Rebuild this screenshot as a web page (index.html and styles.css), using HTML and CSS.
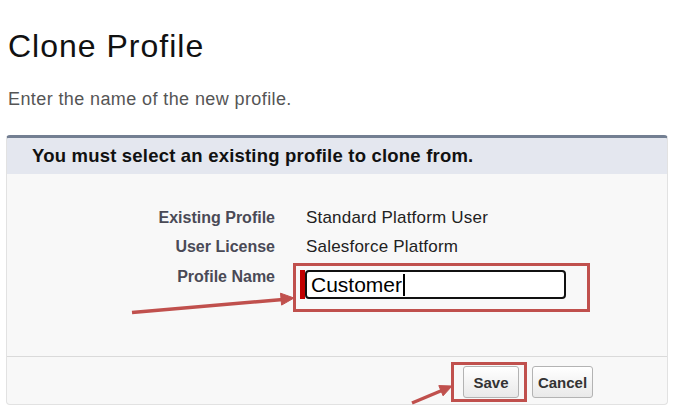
FILE: index.html
```html
<!DOCTYPE html>
<html lang="en">
<head>
<meta charset="utf-8">
<title>Clone Profile</title>
<link rel="stylesheet" href="styles.css">
</head>
<body>
<h1 class="page-title">Clone Profile</h1>
<p class="subtitle">Enter the name of the new profile.</p>

<div class="panel">
  <div class="panel-head">You must select an existing profile to clone from.</div>
  <div class="panel-body">
    <div class="row">
      <div class="label">Existing Profile</div>
      <div class="value">Standard Platform User</div>
    </div>
    <div class="row">
      <div class="label">User License</div>
      <div class="value">Salesforce Platform</div>
    </div>
    <div class="row row-input">
      <div class="label label-input">Profile Name</div>
      <div class="highlight highlight-input">
        <span class="req"></span>
        <div class="input">Customer<span class="caret"></span></div>
      </div>
    </div>
  </div>
  <div class="panel-foot">
    <div class="highlight highlight-btn">
      <button class="btn btn-save" type="button">Save</button>
    </div>
    <button class="btn btn-cancel" type="button">Cancel</button>
  </div>
</div>

<svg class="annotations" width="673" height="409" viewBox="0 0 673 409" aria-hidden="true">
  <g fill="#c0504d" stroke="#c0504d">
    <line x1="132" y1="312.5" x2="283" y2="299.4" stroke-width="3.5"/>
    <polygon points="294,298 281.6,305.1 280.5,293.2" stroke-width="1"/>
    <line x1="412" y1="403" x2="443" y2="390" stroke-width="3.5"/>
    <polygon points="452,386 443.1,395.8 438.8,385.6" stroke-width="1"/>
  </g>
</svg>
</body>
</html>
```
FILE: styles.css
```css
html, body {
  margin: 0;
  padding: 0;
  background: #ffffff;
}

body {
  position: relative;
  width: 673px;
  height: 409px;
  overflow: hidden;
  font-family: "Liberation Sans", Arial, sans-serif;
  color: #222;
}

.page-title {
  margin: 31px 0 0 8px;
  font-size: 32px;
  line-height: 30px;
  font-weight: normal;
  letter-spacing: 1px;
  color: #111;
}

.subtitle {
  margin: 30px 0 0 8px;
  font-size: 18px;
  line-height: 17px;
  letter-spacing: 0.4px;
  color: #555;
}

.panel {
  margin: 27px 5px 0 6px;
  border: 1px solid #e2e2e2;
  border-top: 3px solid #737f92;
  border-radius: 4px;
  background: #f8f8f8;
  overflow: hidden;
}

.panel-head {
  height: 36px;
  line-height: 36px;
  padding-left: 25px;
  background: #e4e7ef;
  font-size: 18.5px;
  font-weight: bold;
  letter-spacing: 0.2px;
  color: #111;
}

.panel-body {
  padding: 34px 0 44px;
}

.row {
  display: flex;
  align-items: flex-start;
}

.row + .row {
  margin-top: 9px;
}

.row.row-input {
  margin-top: 6px;
}

.label {
  width: 268px;
  text-align: right;
  font-size: 16px;
  line-height: 20px;
  font-weight: bold;
  color: #4a4a56;
}

.label-input {
  padding-top: 4px;
}

.value {
  margin-left: 18px;
  padding-left: 13px;
  font-size: 17px;
  line-height: 20px;
  letter-spacing: 0.2px;
  color: #222;
}

.highlight {
  border: 3px solid #c0504d;
  display: flex;
}

.highlight-input {
  margin-left: 18px;
  padding: 4px 21px 10px 4px;
}

.req {
  width: 5px;
  height: 29px;
  background: #c00000;
}

.input {
  box-sizing: border-box;
  width: 261px;
  height: 29px;
  border: 2px solid #111;
  border-radius: 4px;
  background: #fff;
  padding-left: 4px;
  font-size: 21px;
  line-height: 25px;
  color: #000;
  display: flex;
  align-items: center;
}

.caret {
  display: inline-block;
  width: 2px;
  height: 22px;
  margin-left: 1px;
  background: #000;
}

.panel-foot {
  border-top: 1px solid #dadada;
  padding: 5px 0 2px 444px;
  display: flex;
  align-items: flex-start;
}

.highlight-btn {
  padding: 1px 5px 1px 9px;
}

.btn {
  box-sizing: border-box;
  height: 32px;
  padding: 0;
  border: 1px solid #b3b3b3;
  border-radius: 3px;
  background: linear-gradient(#ffffff, #e9e9e9);
  font-family: "Liberation Sans", Arial, sans-serif;
  font-size: 15px;
  font-weight: bold;
  color: #333;
}

.btn-save {
  width: 56px;
}

.btn-cancel {
  width: 61px;
  margin-left: 5px;
  margin-top: 4px;
}

.annotations {
  position: absolute;
  top: 0;
  left: 0;
  pointer-events: none;
}
```
